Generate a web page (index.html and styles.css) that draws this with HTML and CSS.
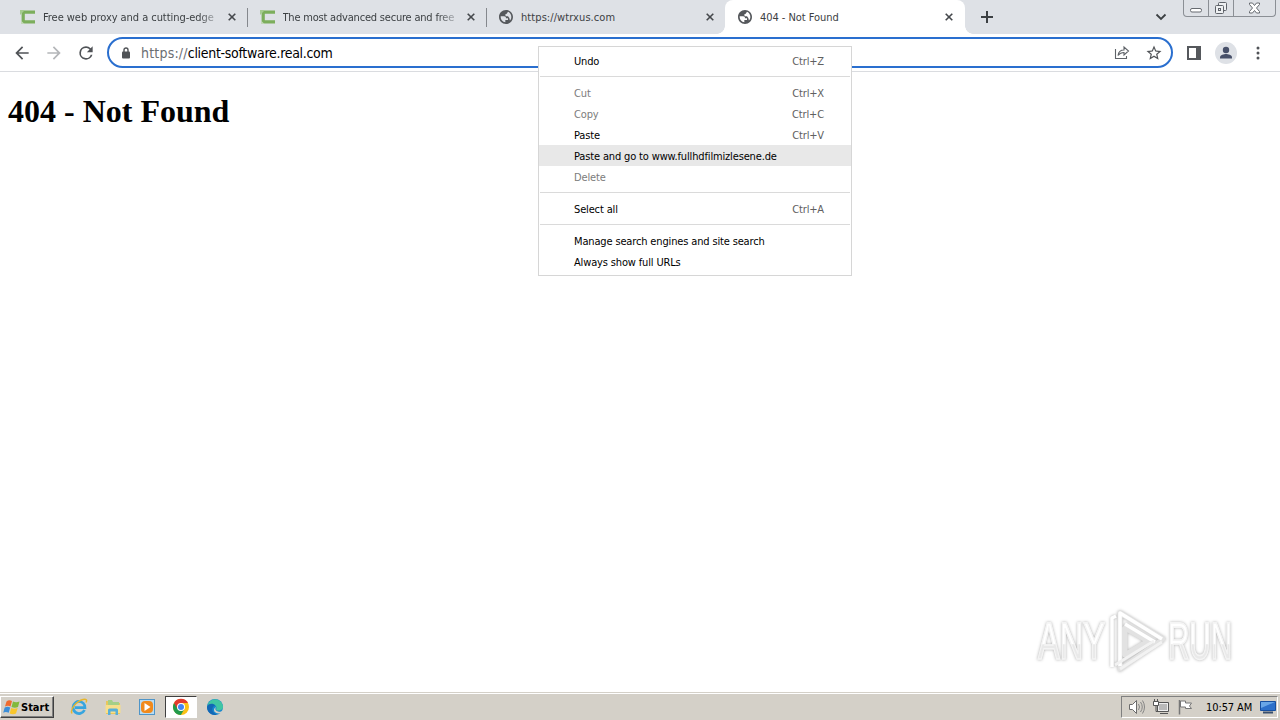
FILE: index.html
```html
<!DOCTYPE html>
<html lang="en">
<head>
    <meta charset="UTF-8">
    <title>404 - Not Found</title>
    <link rel="stylesheet" href="styles.css">
</head>
<body>
    <svg class="defs" width="0" height="0">
        <symbol id="globe" viewBox="0 0 24 24">
            <path d="M12 1.500C6.200 1.500 1.500 6.200 1.500 12S6.200 22.500 12 22.500 22.500 17.800 22.500 12 17.800 1.500 12 1.500zm-1 18.430c-3.950-.49-7-3.850-7-7.930 0-.4.030-.8.100-1.200H9c2.500 0 3 1.200 3 3.200h3v2.500h-4v3.430zm6.900-2.540L17 13.500l-2-2.500h-3l-1.500-2.500L13 7l2-2.800c2.930 1.190 5 4.360 5 7.800 0 2.080-.8 3.970-2.100 5.390z"/>
        </symbol>
        <symbol id="close" viewBox="0 0 8 8">
            <path d="M.7.7l6.600 6.600M7.300.7L.7 7.300" stroke="#45484c" stroke-width="1.600"/>
        </symbol>
        <symbol id="croxy" viewBox="0 0 16 16">
            <path d="M15 3.200H3.200v9.600H15" fill="none" stroke="#7cae5c" stroke-width="3.200"/>
            <path d="M0 1h5L0 6z" fill="#a6cb91"/>
            <path d="M1 11.500l3.500 3.500H1z" fill="#c3d8b8"/>
        </symbol>
    </svg>

    <div class="tabs">
        <div class="tab">
            <svg class="favicon"><use href="#croxy"/></svg>
            <span class="title fade">Free web proxy and a cutting-edge</span>
            <svg class="close"><use href="#close"/></svg>
        </div>
        <div class="tab">
            <svg class="favicon"><use href="#croxy"/></svg>
            <span class="title fade long">The most advanced secure and free</span>
            <svg class="close"><use href="#close"/></svg>
        </div>
        <div class="tab last">
            <svg class="favicon"><use href="#globe"/></svg>
            <span class="title">https://wtrxus.com</span>
            <svg class="close"><use href="#close"/></svg>
        </div>
        <div class="tab active">
            <svg class="favicon"><use href="#globe"/></svg>
            <span class="title">404 - Not Found</span>
            <svg class="close"><use href="#close"/></svg>
        </div>
        <svg class="new-tab" width="12" height="12"><path d="M6 0v12M0 6h12" stroke="#3c4043" stroke-width="2"/></svg>
        <svg class="tab-search" width="12" height="8"><path d="M1.500 1.500L6 6l4.500-4.500" fill="none" stroke="#3c4043" stroke-width="1.800"/></svg>
        <div class="window-buttons">
            <span><svg width="12" height="14"><rect x=".5" y="8.500" width="11" height="3.500" rx="1.500" fill="#fff" stroke="#666a70"/></svg></span>
            <span><svg width="14" height="15"><g fill="#eef0f2" stroke="#5f636a"><rect x="4.500" y="2.500" width="8" height="8" rx="1"/><rect x="1.500" y="5.500" width="8" height="8" rx="1"/><rect x="4.500" y="8.500" width="2" height="2"/></g></svg></span>
            <span><svg width="13" height="12"><path d="M1.500 1h3l2 2.500L8.500 1h3v1.500L8.500 6l3 3.500V11h-3l-2-2.500L4.500 11h-3V9.500l3-3.500-3-3.500z" fill="#fff" stroke="#666a70"/></svg></span>
        </div>
    </div>

    <div class="toolbar">
        <svg class="nav" viewBox="0 0 24 24"><path d="M20 11H7.830l5.590-5.590L12 4l-8 8 8 8 1.410-1.410L7.830 13H20v-2z"/></svg>
        <svg class="nav off" viewBox="0 0 24 24"><path d="M12 4l-1.410 1.410L16.170 11H4v2h12.170l-5.580 5.590L12 20l8-8z"/></svg>
        <svg class="nav" viewBox="0 0 24 24"><path d="M17.650 6.350A7.958 7.958 0 0 0 12 4a8 8 0 1 0 7.730 10h-2.080A6 6 0 1 1 12 6c1.660 0 3.140.69 4.220 1.780L13 11h7V4l-2.350 2.350z"/></svg>
        <div class="omnibox">
            <svg class="lock" width="8" height="12"><path d="M2 5V3a2 2 0 0 1 4 0v2" fill="none" stroke="#505357" stroke-width="1.400"/><rect y="4.500" width="8" height="7" rx="1" fill="#505357"/></svg>
            <span class="url"><span class="scheme">https://</span>client-software.real.com</span>
            <svg class="share" width="16" height="15"><path d="M1.500 4v9.500h11v-2.500M4 10.500c.5-3.500 2.500-5.500 6-5.500V2l4.500 4-4.500 4V7.500c-2.500 0-4.500 1-6 3z" fill="none" stroke="#5f6368" stroke-width="1.100"/></svg>
            <svg class="star" width="18" height="18" viewBox="0 0 24 24"><path d="M22 9.240l-7.190-.62L12 2 9.190 8.630 2 9.240l5.460 4.730L5.820 21 12 17.270 18.180 21l-1.630-7.030L22 9.240zM12 15.400l-3.760 2.270 1-4.280-3.320-2.880 4.380-.38L12 6.100l1.710 4.040 4.380.38-3.320 2.880 1 4.280L12 15.400z"/></svg>
        </div>
        <svg class="side-panel" width="14" height="14"><path d="M1 1h12v12H1z" fill="#fff" stroke="#55585c" stroke-width="2"/><path d="M9 0h5v14H9z" fill="#55585c"/></svg>
        <svg class="avatar" width="22" height="22"><circle cx="11" cy="11" r="11" fill="#dee1e6"/><circle cx="11" cy="8" r="3.200" fill="#475069"/><path d="M5 16.500v-1.200c0-2.200 4-3.300 6-3.300s6 1.100 6 3.300v1.200z" fill="#475069"/></svg>
        <svg class="dots" width="4" height="14"><g fill="#505357"><circle cx="2" cy="2" r="1.500"/><circle cx="2" cy="7" r="1.500"/><circle cx="2" cy="12" r="1.500"/></g></svg>
    </div>

    <div class="page">
        <h1>404 - Not Found</h1>
    </div>

    <div class="context-menu">
        <div class="item"><span>Undo</span><kbd>Ctrl+Z</kbd></div>
        <hr>
        <div class="item disabled"><span>Cut</span><kbd>Ctrl+X</kbd></div>
        <div class="item disabled"><span>Copy</span><kbd>Ctrl+C</kbd></div>
        <div class="item"><span>Paste</span><kbd>Ctrl+V</kbd></div>
        <div class="item hover"><span>Paste and go to www.fullhdfilmizlesene.de</span></div>
        <div class="item disabled"><span>Delete</span></div>
        <hr>
        <div class="item"><span>Select all</span><kbd>Ctrl+A</kbd></div>
        <hr>
        <div class="item"><span>Manage search engines and site search</span></div>
        <div class="item"><span>Always show full URLs</span></div>
    </div>

    <div class="watermark">
        <div class="word"><span>ANY</span></div>
        <svg width="60" height="64" viewBox="0 0 60 64">
            <g fill="none" stroke-linejoin="round">
                <path d="M13 4l43 26-43 30zM18 19v27l23-14z" stroke="#e2e2e2" stroke-width="5"/>
                <path d="M5 58V9l4-2M13 57V4l42 26M18 15l30 18" stroke="#fff" stroke-width="3.500"/>
                <path d="M55 33L13 60M47 32L8 56" stroke="#f2f2f2" stroke-width="3"/>
            </g>
        </svg>
        <div class="word"><span>RUN</span></div>
    </div>

    <div class="taskbar">
        <div class="start">
            <svg width="18" height="16"><path d="M3.500 2.500Q6 .5 9 2L7.500 7.500Q5 6 2 7.500z" fill="#ef6b2f"/><path d="M10 2.500q3 1.500 6.500 0L15 8q-3 1.500-6.500 0z" fill="#82b93c"/><path d="M1.700 8.500q3-1.500 5.500 0l-1.500 5.300q-3-1.500-5.500 0z" fill="#3c8ed8"/><path d="M8.200 9q3 1.500 6.500 0L13 14.500q-3 1.500-6.300 0z" fill="#f8c62c"/></svg>
            <span>Start</span>
        </div>
        <div class="task">
            <svg width="18" height="18"><path d="M14.500 12a6 6 0 1 1 .2-4.500l.2 2.200H5" fill="none" stroke="#37a5df" stroke-width="2.700"/><path d="M2 15.500C-.5 11 7 3 13 1.500q5-1 3 3" fill="none" stroke="#e7b62c" stroke-width="1.500"/></svg>
        </div>
        <div class="task">
            <svg width="18" height="18"><path d="M2 3h5l1.500 2H16v11H2z" fill="#e9c75b"/><path d="M4 2h4l1 2h6v3H4z" fill="#a5cf87"/><path d="M1.500 7h15v8h-15z" fill="#f7df8b"/><path d="M4 17v-5q0-1.500 1.500-1.500h7Q14 10.500 14 12v5h-2.500v-3.500h-5V17z" fill="#58afd8"/></svg>
        </div>
        <div class="task">
            <svg width="18" height="18"><rect x="1.500" y="1.500" width="15" height="15" fill="#b9dcf3" stroke="#4f95c8"/><rect x="3" y="3" width="12" height="12" rx="4" fill="#f18a1c"/><path d="M6.500 5v8l6-4z" fill="#fff"/></svg>
        </div>
        <div class="task running">
            <svg width="18" height="18"><circle cx="9" cy="9" r="8" fill="#fbc116"/><path d="M2 5a8 8 0 0 0 6.800 12L12.500 11 9 9z" fill="#229a4b"/><path d="M2 5l3.600 6L9 5h7A8 8 0 0 0 2 5z" fill="#e33b2e"/><circle cx="9" cy="9" r="4" fill="#fff"/><circle cx="9" cy="9" r="3" fill="#4285f4"/></svg>
        </div>
        <div class="task">
            <svg width="18" height="18"><circle cx="9" cy="9" r="8" fill="#1686ce"/><path d="M1.200 8A8 8 0 0 1 17 8c.5 3-2 4.500-4.500 4.500-2 0-2.800-.8-2.200-1.800C11.500 8.500 8 4 1.200 8z" fill="#40c5a3"/><path d="M1 9c.5-3.500 6-4.500 8.500-1.500C5 8 5 15 11 16.700 5 18 1 14 1 9z" fill="#1267b5"/><path d="M10 9q-2 3 2 4.500 3 .8 4.500-.8l-1 2q-4 2-7-1-1.500-3 1.500-4.700z" fill="#d4d0c8"/></svg>
        </div>
        <div class="tray">
            <svg width="18" height="18"><path d="M1.500 6.500h3l4-4v13l-4-4h-3z" fill="#fff" stroke="#6b6b6b"/><path d="M10.500 6q2 3 0 6M12.500 4q3.500 5 0 10M14.500 2.500q4 6.500 0 13" fill="none" stroke="#858585"/></svg>
            <svg width="18" height="18"><path d="M5.500 4.500h11v9h-11z" fill="#eee" stroke="#555"/><path d="M7 6h8v6H7z" fill="#b9b9b9"/><path d="M8 15.500h8M1.500 3.500h5v4h-5zM2.500 1v3M5.500 1v3M4 8v5.500h4" fill="none" stroke="#555"/><path d="M2 4h4v3H2z" fill="#fff"/></svg>
            <svg width="18" height="18"><path d="M3.500 2v14.500" stroke="#777" stroke-width="1.500"/><path d="M4.500 3h5v2h6l-2 3 2 2.500h-6v-1.500h-5z" fill="#fff" stroke="#777"/></svg>
            <span class="clock">10:57 AM</span>
            <svg class="desktop" width="16" height="14"><path d="M.5 1.500h15v9H.5z" fill="#2d70ca" stroke="#174f9f"/><path d="M1 2h14L1 8z" fill="#69a6e7"/><path d="M3 12.500h10" stroke="#384f6e" stroke-width="2"/></svg>
        </div>
    </div>
</body>
</html>
```

FILE: styles.css
```css
* {
    box-sizing: border-box;
}
body {
    margin: 0;
    width: 1280px;
    height: 720px;
    overflow: hidden;
    display: flex;
    flex-direction: column;
    background: #fff;
    font-family: "DejaVu Sans Condensed", "DejaVu Sans", sans-serif;
    font-stretch: condensed;
    font-size: 11px;
    color: #000;
}
svg {
    display: block;
    flex: none;
}
.defs {
    position: absolute;
}

/* tab strip */
.tabs {
    display: flex;
    flex: none;
    height: 34px;
    padding-left: 8px;
    background: #dee1e6;
}
.tab {
    display: flex;
    align-items: center;
    width: 239.500px;
    padding: 0 12px 0 12px;
    position: relative;
    color: #3c4043;
}
.tab:not(.last):not(.active)::after {
    content: "";
    position: absolute;
    right: 0;
    top: 8px;
    width: 1px;
    height: 19px;
    background: #85888d;
}
.tab.last {
    width: 238px;
    padding: 0 11px;
}
.tab.active {
    width: 240px;
    background: #fff;
    border-radius: 8px 8px 0 0;
}
.tab.active::before,
.tab.active::after {
    content: "";
    position: absolute;
    bottom: 0;
    width: 8px;
    height: 8px;
}
.tab.active::before {
    left: -8px;
    background: radial-gradient(circle at 0 0, #dee1e6 7.500px, #fff 8px);
}
.tab.active::after {
    right: -8px;
    background: radial-gradient(circle at 100% 0, #dee1e6 7.500px, #fff 8px);
}
.favicon {
    width: 16px;
    height: 16px;
    fill: #55585c;
}
.title {
    flex: 1;
    margin: 0 8px 0 7px;
    white-space: nowrap;
    letter-spacing: -0.050px;
}
.fade {
    -webkit-mask-image: linear-gradient(90deg, #000 88%, rgba(0,0,0,0.4) 96%);
    mask-image: linear-gradient(90deg, #000 88%, rgba(0,0,0,0.4) 96%);
}
.title.long {
    letter-spacing: -0.2px;
}
.tab.last .title {
    letter-spacing: 0.080px;
}
.close {
    width: 8px;
    height: 8px;
}
.new-tab {
    margin: 11px 0 0 16px;
}
.tab-search {
    margin: 13px 16px 0 auto;
}
.window-buttons {
    display: flex;
    width: 93px;
    height: 17px;
    margin-right: 4px;
    border: 1px solid #8b8f95;
    border-top: 0;
    border-radius: 0 0 4px 4px;
}
.window-buttons span {
    display: flex;
    justify-content: center;
    width: 25px;
    border-right: 1px solid #8b8f95;
}
.window-buttons span:last-child {
    flex: 1;
    padding-top: 2px;
    border: 0;
}

/* toolbar */
.toolbar {
    display: flex;
    align-items: center;
    flex: none;
    height: 38px;
    padding: 0 20px 0 12px;
    border-bottom: 1px solid #dadce0;
}
.nav {
    width: 20px;
    height: 20px;
    margin-right: 12px;
    fill: #505357;
}
.nav.off {
    fill: #b4b6b9;
}
.omnibox {
    display: flex;
    align-items: center;
    width: 1066px;
    height: 31px;
    margin-left: -1px;
    padding: 0 8px 0 13px;
    border: 2px solid #2a6fcf;
    border-radius: 16px;
}
.url {
    flex: 1;
    margin-left: 11px;
    padding-top: 1px;
    font-size: 14px;
    letter-spacing: -0.220px;
}
.scheme {
    color: #6b6e72;
    letter-spacing: 0.200px;
}
.url {
    letter-spacing: -0.300px;
}
.share {
    margin-right: 15px;
}
.star {
    fill: #505357;
}
.side-panel {
    margin-left: 14px;
}
.avatar {
    margin-left: 14px;
}
.dots {
    margin-left: auto;
}

/* page */
.page {
    flex: 1;
    padding: 0 8px;
    font-family: "Liberation Serif", serif;
}
h1 {
    margin: 21px 0;
    font-size: 32px;
    line-height: 37px;
}

/* context menu */
.context-menu {
    position: absolute;
    left: 538px;
    top: 46px;
    width: 314px;
    padding: 3px 0;
    background: #fff;
    border: 1px solid #d6d6d6;
}
.item {
    display: flex;
    justify-content: space-between;
    align-items: center;
    height: 21px;
    padding: 2px 27px 0 35px;
    letter-spacing: -0.150px;
}
.item kbd {
    font-family: inherit;
    color: #606060;
}
.disabled {
    color: #7c7c7c;
}
.hover {
    background: #e8e8e8;
}
.context-menu hr {
    height: 1px;
    margin: 5px 1px;
    border: 0;
    background: #dadada;
}

/* watermark */
.watermark {
    position: absolute;
    left: 1038px;
    top: 609px;
    display: flex;
    align-items: center;
    filter: drop-shadow(0 0 1.500px rgba(0,0,0,0.3));
}
.word {
    width: 65px;
    height: 64px;
}
.word span {
    display: inline-block;
    font: 51px/66px "Liberation Sans", sans-serif;
    color: transparent;
    background: linear-gradient(#fff 53%, #e9e9e9 54%);
    -webkit-background-clip: text;
    background-clip: text;
    -webkit-text-stroke: 1.500px #f4f4f4;
    transform: scaleX(0.64);
    transform-origin: 0 0;
}
.word:last-child span {
    transform: scaleX(0.58);
}
.watermark svg {
    margin: 0 1px 0 4px;
}

/* taskbar */
.taskbar {
    display: flex;
    align-items: center;
    flex: none;
    height: 28px;
    padding: 1px 2px 0 0;
    background: #d4d0c8;
    border-top: 1px solid #d4d0c8;
    box-shadow: inset 0 1px #fff;
}
.start {
    display: flex;
    align-items: center;
    width: 54px;
    height: 22px;
    margin-right: 9px;
    padding-left: 2px;
    border: 1px solid;
    border-color: #fff #404040 #404040 #fff;
    box-shadow: inset -1px -1px #808080;
    font-weight: bold;
    letter-spacing: 0;
}
.task {
    display: flex;
    align-items: center;
    justify-content: center;
    width: 32px;
    height: 22px;
    margin-right: 2px;
}
.running {
    background: #fff;
    border: 1px solid;
    border-color: #404040 #fff #fff #404040;
}
.tray {
    display: flex;
    align-items: center;
    height: 22px;
    margin-left: auto;
    padding-left: 6px;
    border: 1px solid;
    border-color: #808080 #fff #fff #808080;
}
.tray svg {
    margin-right: 6px;
}
.clock {
    width: 47px;
    margin: 0 7px 0 6px;
    white-space: nowrap;
    letter-spacing: -0.1px;
}
.tray .desktop {
    margin-right: 1px;
}
```
